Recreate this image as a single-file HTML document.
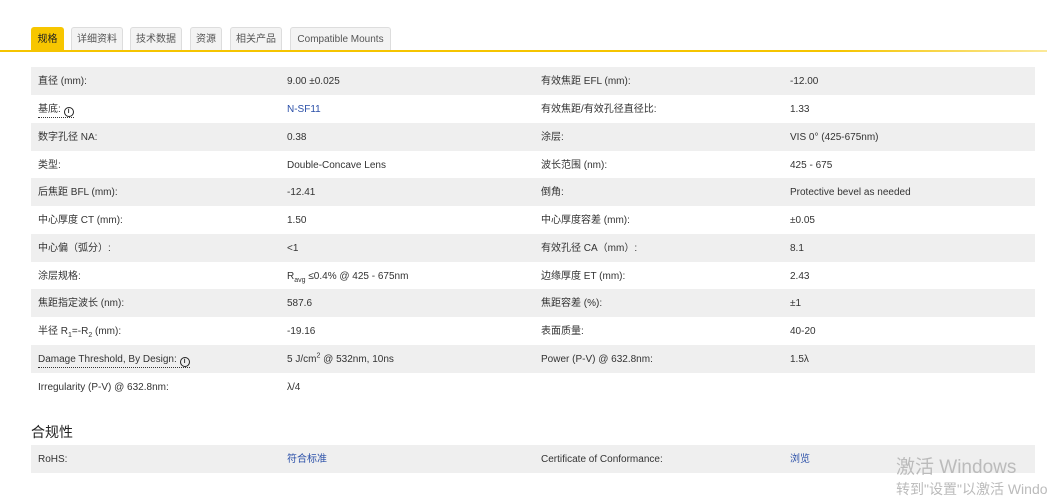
<!DOCTYPE html>
<html><head><meta charset="utf-8"><style>
*{margin:0;padding:0;box-sizing:border-box}
body{width:1047px;height:501px;background:#fff;font-family:"Liberation Sans","Noto Sans CJK SC",sans-serif;font-size:10px;color:#333;position:relative;overflow:hidden}
.tabs{position:absolute;top:27px;left:0;height:24px}
.tab{position:absolute;top:0;height:24px;border:1px solid #ddd;border-bottom:none;background:#f3f3f3;border-radius:3px 3px 0 0;color:#555;font-size:10px;line-height:23px;text-align:center;white-space:nowrap}
.tab.on{background:#f7c600;border-color:#f7c600;color:#222}
.line{position:absolute;top:50px;left:0;width:1047px;height:2px;background:linear-gradient(90deg,#f5c400 0%,#f5c400 80%,#fbe99a 100%)}
.row{position:absolute;left:31px;width:1004px;height:28px;line-height:28px}
.row.g{background:#efefef}
.row>span{position:absolute;top:1px;white-space:nowrap}
.c1{left:7px}.c2{left:256px}.c3{left:510px}.c4{left:759px}
a{color:#2a4fa8;text-decoration:none}
.dot{border-bottom:1px dotted #333;line-height:13px;display:inline-block;white-space:nowrap}
.i{display:inline-block;width:10px;height:10px;border:1.5px solid #222;border-radius:50%;font-size:7px;line-height:7px;text-align:center;font-weight:bold;vertical-align:-1px}
sub,sup{line-height:0}
h3{position:absolute;left:31px;top:422px;font-size:14px;font-weight:normal;color:#222}
.wm{position:absolute;left:896px;top:452px;color:#bbb;font-size:19px;white-space:nowrap}
.wm2{position:absolute;left:896px;top:479px;color:#bbb;font-size:14px;white-space:nowrap}
</style></head><body>
<div class="tabs">
<div class="tab on" style="left:31px;width:33px">规格</div>
<div class="tab" style="left:71px;width:52px">详细资料</div>
<div class="tab" style="left:130px;width:52px">技术数据</div>
<div class="tab" style="left:190px;width:32px">资源</div>
<div class="tab" style="left:230px;width:52px">相关产品</div>
<div class="tab" style="left:290px;width:101px">Compatible Mounts</div>
</div>
<div class="line"></div>

<div class="row g" style="top:67px"><span class="c1">直径 (mm):</span><span class="c2">9.00 ±0.025</span><span class="c3">有效焦距 EFL (mm):</span><span class="c4">-12.00</span></div>
<div class="row" style="top:95px"><span class="c1"><span class="dot">基底: <span class="i">i</span></span></span><span class="c2"><a>N-SF11</a></span><span class="c3">有效焦距/有效孔径直径比:</span><span class="c4">1.33</span></div>
<div class="row g" style="top:123px"><span class="c1">数字孔径 NA:</span><span class="c2">0.38</span><span class="c3">涂层:</span><span class="c4">VIS 0° (425-675nm)</span></div>
<div class="row" style="top:151px"><span class="c1">类型:</span><span class="c2">Double-Concave Lens</span><span class="c3">波长范围 (nm):</span><span class="c4">425 - 675</span></div>
<div class="row g" style="top:178px"><span class="c1">后焦距 BFL (mm):</span><span class="c2">-12.41</span><span class="c3">倒角:</span><span class="c4">Protective bevel as needed</span></div>
<div class="row" style="top:206px"><span class="c1">中心厚度 CT (mm):</span><span class="c2">1.50</span><span class="c3">中心厚度容差 (mm):</span><span class="c4">±0.05</span></div>
<div class="row g" style="top:234px"><span class="c1">中心偏（弧分）:</span><span class="c2">&lt;1</span><span class="c3">有效孔径 CA（mm）:</span><span class="c4">8.1</span></div>
<div class="row" style="top:262px"><span class="c1">涂层规格:</span><span class="c2">R<sub style="font-size:7px">avg</sub> ≤0.4% @ 425 - 675nm</span><span class="c3">边缘厚度 ET (mm):</span><span class="c4">2.43</span></div>
<div class="row g" style="top:289px"><span class="c1">焦距指定波长 (nm):</span><span class="c2">587.6</span><span class="c3">焦距容差 (%):</span><span class="c4">±1</span></div>
<div class="row" style="top:317px"><span class="c1">半径 R<sub style="font-size:7px">1</sub>=-R<sub style="font-size:7px">2</sub> (mm):</span><span class="c2">-19.16</span><span class="c3">表面质量:</span><span class="c4">40-20</span></div>
<div class="row g" style="top:345px"><span class="c1"><span class="dot">Damage Threshold, By Design: <span class="i">i</span></span></span><span class="c2">5 J/cm<sup style="font-size:7px">2</sup> @ 532nm, 10ns</span><span class="c3">Power (P-V) @ 632.8nm:</span><span class="c4">1.5λ</span></div>
<div class="row" style="top:373px"><span class="c1">Irregularity (P-V) @ 632.8nm:</span><span class="c2">λ/4</span></div>

<h3>合规性</h3>
<div class="row g" style="top:445px"><span class="c1">RoHS:</span><span class="c2"><a>符合标准</a></span><span class="c3">Certificate of Conformance:</span><span class="c4"><a>浏览</a></span></div>
<div class="wm">激活 Windows</div>
<div class="wm2">转到"设置"以激活 Windows</div>
</body></html>
